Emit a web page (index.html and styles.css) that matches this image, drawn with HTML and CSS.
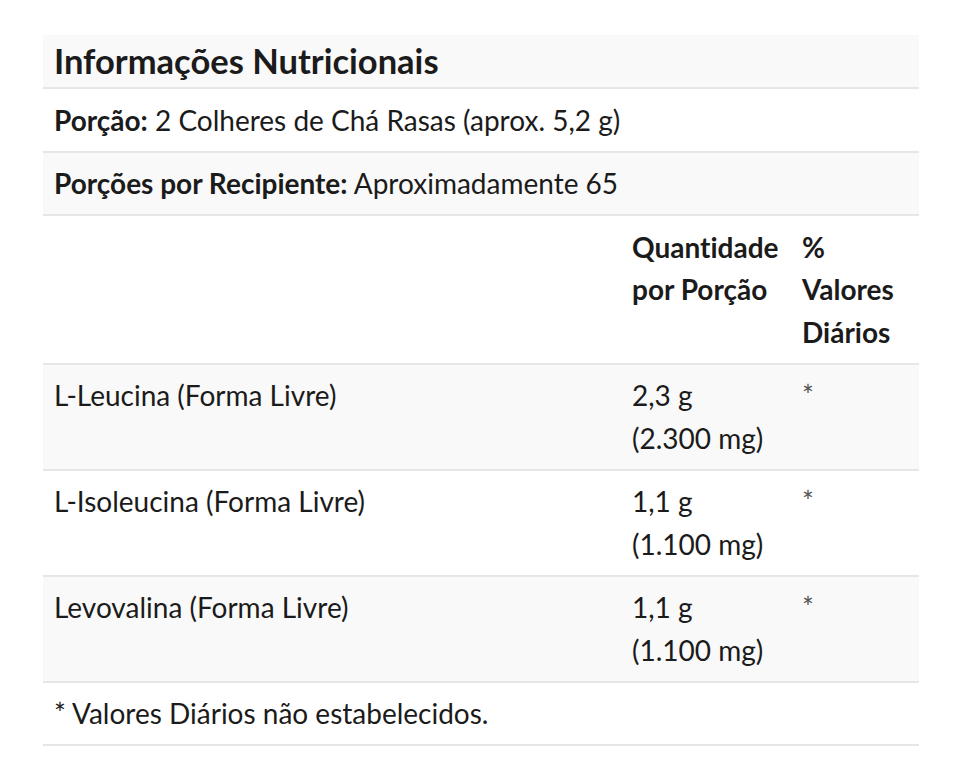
FILE: index.html
```html
<!DOCTYPE html>
<html lang="pt-BR">
<head>
<meta charset="utf-8">
<title>Informações Nutricionais</title>
<link rel="stylesheet" href="styles.css">
</head>
<body>
<div class="page">
  <table class="nutri">
    <colgroup>
      <col class="c-name">
      <col class="c-qty">
      <col class="c-dv">
    </colgroup>
    <tbody>
      <tr class="alt title-row"><td colspan="3" class="title">Informações Nutricionais</td></tr>
      <tr><td colspan="3"><strong>Porção:</strong> 2 Colheres de Chá Rasas (aprox. 5,2 g)</td></tr>
      <tr class="alt"><td colspan="3"><strong>Porções por Recipiente:</strong> Aproximadamente 65</td></tr>
      <tr class="head"><td></td><th>Quantidade por Porção</th><th>% Valores Diários</th></tr>
      <tr class="alt"><td>L-Leucina (Forma Livre)</td><td>2,3&nbsp;g (2.300&nbsp;mg)</td><td class="star">*</td></tr>
      <tr><td>L-Isoleucina (Forma Livre)</td><td>1,1&nbsp;g (1.100&nbsp;mg)</td><td class="star">*</td></tr>
      <tr class="alt"><td>Levovalina (Forma Livre)</td><td>1,1&nbsp;g (1.100&nbsp;mg)</td><td class="star">*</td></tr>
      <tr><td colspan="3">* Valores Diários não estabelecidos.</td></tr>
    </tbody>
  </table>
</div>
</body>
</html>
```
FILE: styles.css
```css
html, body {
  margin: 0;
  padding: 0;
  background: #ffffff;
}
body {
  font-family: Lato, "Open Sans", sans-serif;
  color: #1b1b1b;
  font-size: 28px;
  line-height: 42.5px;
  font-variant-ligatures: none;
}
.page {
  padding: 35px 44px 0 43px;
}
.nutri {
  width: 876px;
  border-collapse: collapse;
  table-layout: fixed;
}
.c-name { width: 578px; }
.c-qty { width: 170px; }
.c-dv { width: 128px; }
.nutri td,
.nutri th {
  padding: 9.5px 11px;
  border-bottom: 2px solid #e6e6e6;
  vertical-align: top;
  text-align: left;
  font-weight: 400;
}
.nutri th,
.nutri strong {
  font-weight: 700;
}
.nutri tr.alt {
  background: #f9f9f9;
}
.nutri td.title {
  font-size: 34.5px;
  font-weight: 700;
  line-height: 32px;
  padding-top: 10px;
  padding-bottom: 10px;
}
.star {
  color: #555;
}
```
